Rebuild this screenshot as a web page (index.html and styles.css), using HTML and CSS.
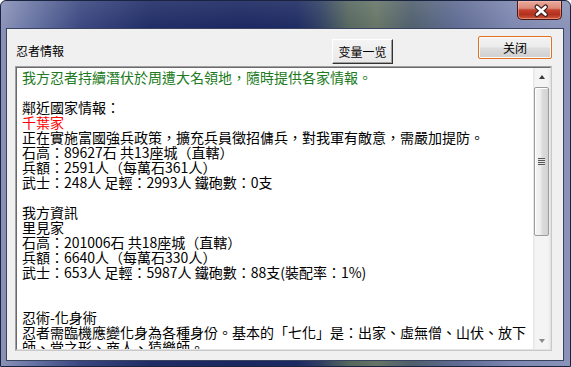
FILE: index.html
```html
<!DOCTYPE html>
<html lang="zh-Hant">
<head>
<meta charset="utf-8">
<title>忍者情報</title>
<link rel="stylesheet" href="styles.css">
</head>
<body>
<div class="window">
  <div class="titlebar">
    <div class="close-btn">
      <svg width="45" height="19" viewBox="0 0 45 19">
        <path d="M20 6 L28.5 13.5 M28.5 6 L20 13.5" stroke="#3a2020" stroke-width="5" stroke-linecap="round" fill="none"/>
        <path d="M20 6 L28.5 13.5 M28.5 6 L20 13.5" stroke="#ffffff" stroke-width="2.6" stroke-linecap="round" fill="none"/>
      </svg>
    </div>
  </div>
  <div class="client">
    <div class="header">
      <span class="label">忍者情報</span>
      <span class="spacer"></span>
      <button class="btn-classic">变量一览</button>
      <button class="btn-close">关闭</button>
    </div>
    <div class="textbox">
      <div class="textbox-inner">
        <div class="text">
          <div class="line green">我方忍者持續潛伏於周遭大名領地，隨時提供各家情報。</div>
          <div class="line blank"></div>
          <div class="line">鄰近國家情報：</div>
          <div class="line red">千葉家</div>
          <div class="line">正在實施富國強兵政策，擴充兵員徵招傭兵，對我軍有敵意，需嚴加提防。</div>
          <div class="line">石高：89627石 共13座城（直轄）</div>
          <div class="line">兵額：2591人（每萬石361人）</div>
          <div class="line">武士：248人 足輕：2993人 鐵砲數：0支</div>
          <div class="line blank"></div>
          <div class="line">我方資訊</div>
          <div class="line">里見家</div>
          <div class="line">石高：201006石 共18座城（直轄）</div>
          <div class="line">兵額：6640人（每萬石330人）</div>
          <div class="line">武士：653人 足輕：5987人 鐵砲數：88支(裝配率：1%)</div>
          <div class="line blank"></div>
          <div class="line blank"></div>
          <div class="line">忍術-化身術</div>
          <div class="line">忍者需臨機應變化身為各種身份。基本的「七化」是：出家、虛無僧、山伏、放下</div>
          <div class="line">師、堂之形、商人、猿樂師。</div>
        </div>
        <div class="scrollbar">
          <div class="sb-arrow"><span class="tri-up"></span></div>
          <div class="sb-track">
            <div class="sb-thumb"><span class="grip"></span></div>
          </div>
          <div class="sb-arrow"><span class="tri-down"></span></div>
        </div>
      </div>
    </div>
  </div>
</div>
</body>
</html>
```
FILE: styles.css
```css
html, body {
  margin: 0;
  padding: 0;
  background: #ffffff;
}

body {
  width: 571px;
  height: 367px;
  overflow: hidden;
  font-family: "Noto Sans CJK TC", "Noto Sans CJK SC", sans-serif;
}

.window {
  box-sizing: border-box;
  width: 571px;
  height: 367px;
  display: flex;
  flex-direction: column;
  border-radius: 6px 6px 0 0;
  border: 1px solid #1a2440;
  background:
    linear-gradient(to bottom, rgba(255,255,255,0.10) 0, rgba(255,255,255,0) 30px),
    linear-gradient(to right, #8a92b8 0%, #6a76a4 5%, #3a4680 14%, #1f2c66 26%, #1a2660 42%, #1c2a62 52%, #2e3e62 56%, #55665e 61%, #667466 66%, #4f5f6c 72%, #5e6a92 80%, #7d87b0 90%, #8a93b8 100%);
}

.titlebar {
  flex: none;
  height: 28px;
  display: flex;
  justify-content: flex-end;
  align-items: flex-start;
  padding-right: 8px;
}

.close-btn {
  width: 45px;
  height: 19px;
  box-sizing: border-box;
  border: 1px solid #4a1812;
  border-top: none;
  border-radius: 0 0 5px 5px;
  background: linear-gradient(to bottom, #e9aa9c 0%, #dc8a78 40%, #c4412e 50%, #b2301c 75%, #cf5a3c 100%);
  box-shadow: inset 0 0 0 1px rgba(255,200,190,0.45);
  display: flex;
  justify-content: center;
  align-items: center;
  overflow: hidden;
}

.close-btn svg {
  display: block;
  flex: none;
}

.client {
  flex: 1;
  margin: 0 7px 6px 6px;
  background: #f0f0f0;
  box-shadow: 0 0 0 1px #3a4460;
  display: flex;
  flex-direction: column;
  padding: 0 11px 9px 8px;
  min-height: 0;
}

.header {
  flex: none;
  height: 37px;
  display: flex;
  align-items: flex-start;
  font-family: "Noto Sans CJK TC", "Noto Sans CJK SC", sans-serif;
  font-size: 12px;
  line-height: 12px;
  color: #000;
}

.label {
  margin: 16px 0 0 1px;
}

.spacer {
  flex: 1;
}

.btn-classic {
  margin: 10px 85px 0 0;
  width: 61px;
  height: 25px;
  padding: 0;
  font-family: "Noto Sans CJK SC", sans-serif;
  font-size: 12px;
  color: #000;
  background: linear-gradient(to bottom, #f4f4f4, #e8e8e8);
  border: 1px solid;
  border-color: #ffffff #333333 #333333 #ffffff;
  box-shadow: inset -1px -1px 0 #a0a0a0;
}

.btn-close {
  margin: 7px 0 0 0;
  width: 74px;
  height: 23px;
  padding: 0;
  font-family: "Noto Sans CJK SC", sans-serif;
  font-size: 12px;
  color: #000;
  border: 1px solid #e2701f;
  border-radius: 2px;
  background: linear-gradient(to bottom, #f3f3f3 0%, #ebebeb 48%, #dddddd 52%, #cfcfcf 100%);
  box-shadow: inset 0 0 0 1px #fbfbfb;
}

.textbox {
  flex: 1;
  min-height: 0;
  border: 1px solid #a0a0a0;
  border-right-color: #c8c8c8;
  border-bottom-color: #c8c8c8;
  display: flex;
}

.textbox-inner {
  flex: 1;
  min-width: 0;
  border: 1px solid;
  border-color: #6a6a6a #e3e3e3 #e3e3e3 #6a6a6a;
  background: #ffffff;
  display: flex;
}

.text {
  flex: 1;
  min-width: 0;
  overflow: hidden;
  padding: 2px 0 0 5px;
  font-family: "Noto Sans CJK TC", sans-serif;
  font-size: 14px;
  line-height: 15px;
  color: #000;
  white-space: nowrap;
}

.line {
  height: 15px;
}

.green {
  color: #217a21;
}

.red {
  color: #ff0000;
}

.scrollbar {
  flex: none;
  width: 17px;
  display: flex;
  flex-direction: column;
  background: linear-gradient(to right, #e4e4e4 0%, #f4f4f4 15%, #f4f4f4 85%, #ebebeb 100%);
}

.sb-arrow {
  flex: none;
  height: 17px;
  display: flex;
  justify-content: center;
  align-items: center;
}

.tri-up {
  width: 0;
  height: 0;
  border-left: 3.5px solid transparent;
  border-right: 3.5px solid transparent;
  border-bottom: 4px solid #3c3c3c;
}

.tri-down {
  width: 0;
  height: 0;
  border-left: 3.5px solid transparent;
  border-right: 3.5px solid transparent;
  border-top: 4px solid #8a8a8a;
}

.sb-track {
  flex: 1;
  padding: 2px 1px 0 1px;
}

.sb-thumb {
  box-sizing: border-box;
  height: 149px;
  border: 1px solid #9c9c9c;
  border-radius: 2px;
  background: linear-gradient(to right, #f6f6f6 0%, #ececec 45%, #dcdcdc 55%, #d2d2d2 100%);
  box-shadow: inset 1px 1px 0 #ffffff;
  display: flex;
  justify-content: center;
  align-items: center;
}

.grip {
  width: 7px;
  height: 8px;
  background: repeating-linear-gradient(to bottom, #585858 0 1px, #e6e6e6 1px 2px);
}
```
